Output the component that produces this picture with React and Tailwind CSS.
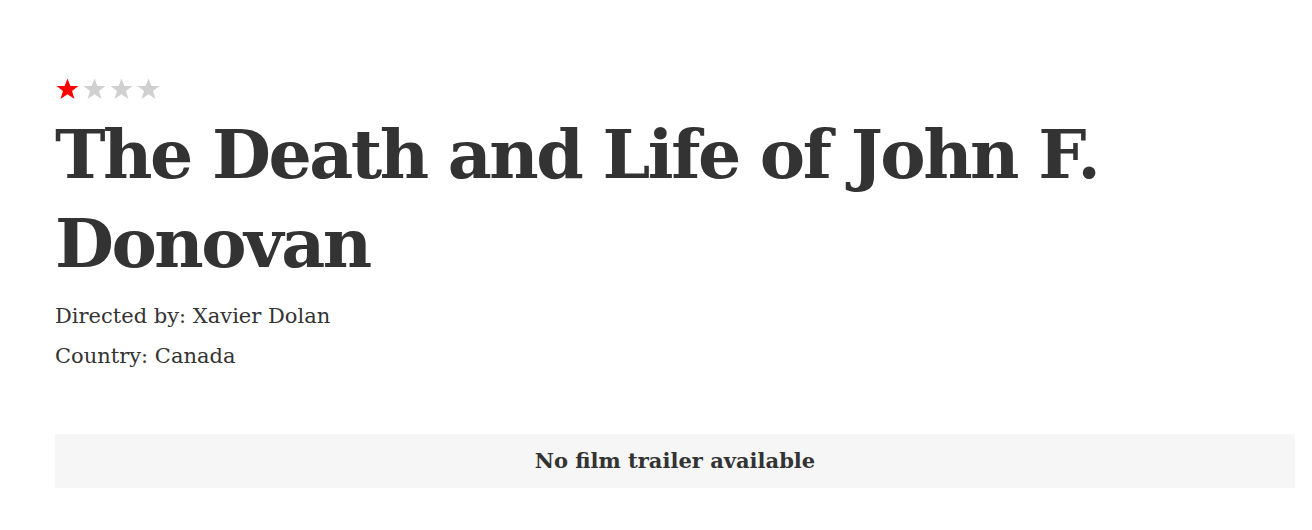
import React from "react";

function Star({ filled }) {
  return (
    <svg viewBox="0 0 24 24" className="h-[24px] w-[27px]">
      <polygon
        points="12,1.5 14.9,9 23,9 16.5,14 19,22 12,17.2 5,22 7.5,14 1,9 9.1,9"
        fill={filled ? "#ff0000" : "#d0d0d0"}
      />
    </svg>
  );
}

export default function App() {
  const rating = 1;

  return (
    <div className="min-h-[530px] bg-white pl-[55px] pt-[77px] text-[#333]">
      {/* Star rating */}
      <div className="flex -ml-[1px]">
        {[0, 1, 2, 3].map((i) => (
          <Star key={i} filled={i < rating} />
        ))}
      </div>

      {/* Title */}
      <h1 className="mt-[9px] w-[1150px] font-['DejaVu_Serif',serif] text-[68px] font-bold leading-[89px] tracking-[-2.5px]">
        The Death and Life of John F. Donovan
      </h1>

      {/* Details */}
      <div className="mt-[8px] font-['DejaVu_Serif',serif] text-[21px] font-light leading-[40px]">
        <p>Directed by: Xavier Dolan</p>
        <p>Country: Canada</p>
      </div>

      {/* Trailer placeholder */}
      <div className="mt-[58px] flex h-[54px] w-[1240px] items-center justify-center bg-[#f6f6f6]">
        <p className="font-['DejaVu_Serif',serif] text-[21px] font-bold">
          No film trailer available
        </p>
      </div>
    </div>
  );
}
